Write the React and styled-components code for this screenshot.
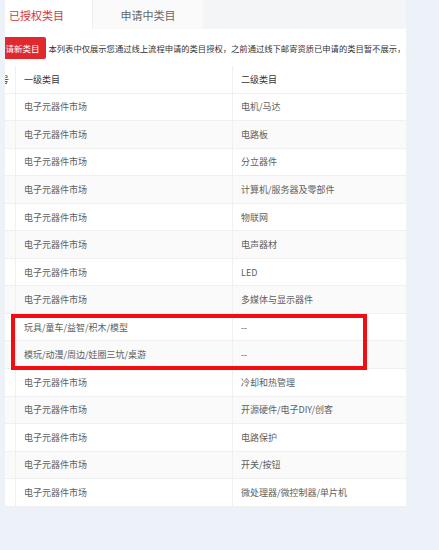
import React from "react";
import styled, { createGlobalStyle } from "styled-components";

const GlobalStyle = createGlobalStyle`
  html, body {
    margin: 0;
    padding: 0;
    background: #edf1f8;
    font-family: "Noto Sans CJK SC", "Noto Sans", sans-serif;
  }
`;

const rows = [
  ["电子元器件市场", "电机/马达"],
  ["电子元器件市场", "电路板"],
  ["电子元器件市场", "分立器件"],
  ["电子元器件市场", "计算机/服务器及零部件"],
  ["电子元器件市场", "物联网"],
  ["电子元器件市场", "电声器材"],
  ["电子元器件市场", "LED"],
  ["电子元器件市场", "多媒体与显示器件"],
  ["玩具/童车/益智/积木/模型", "--"],
  ["模玩/动漫/周边/娃圈三坑/桌游", "--"],
  ["电子元器件市场", "冷却和热管理"],
  ["电子元器件市场", "开源硬件/电子DIY/创客"],
  ["电子元器件市场", "电路保护"],
  ["电子元器件市场", "开关/按钮"],
  ["电子元器件市场", "微处理器/微控制器/单片机"],
];

const Page = styled.div`
  height: 550px;
  padding-left: 5px;
  box-sizing: border-box;
`;

const Panel = styled.div`
  position: relative;
  width: 401px;
  background: #fff;
  overflow: hidden;
`;

const Tabs = styled.div`
  display: flex;
  height: 29px;
  background: #f4f5f7;
`;

const Tab = styled.div`
  display: flex;
  align-items: center;
  justify-content: ${(p) => (p.$active ? "flex-start" : "center")};
  width: ${(p) => p.$w}px;
  padding-left: ${(p) => (p.$active ? 4 : 0)}px;
  box-sizing: border-box;
  font-size: 11px;
  color: ${(p) => (p.$active ? "#d8343a" : "#666")};
  background: ${(p) => (p.$active ? "#fff" : "#fafafa")};
  border-left: ${(p) => (p.$active ? "none" : "1px solid #eeeeee")};
`;

const Scroller = styled.div`
  margin-left: -14px;
`;

const Toolbar = styled.div`
  display: flex;
  align-items: center;
  height: 37px;
  white-space: nowrap;
`;

const Button = styled.div`
  display: flex;
  align-items: center;
  height: 22px;
  padding: 0 6px;
  border-radius: 2px;
  background: #e0292e;
  color: #fff;
  font-size: 8.5px;
  flex-shrink: 0;
`;

const Notice = styled.span`
  margin-left: 3px;
  font-size: 8.3px;
  color: #333;
`;

const Warn = styled.span`
  margin-left: 2px;
  color: #f5a623;
  font-size: 8.3px;
`;

const Row = styled.div`
  display: grid;
  grid-template-columns: 25px 217px 173px;
  height: 27.56px;
  box-sizing: border-box;
  border-bottom: 1px solid #f0f0f0;
  background: ${(p) => (p.$striped ? "#fafafa" : "#fff")};
`;

const Cell = styled.div`
  display: flex;
  align-items: center;
  padding-left: ${(p) => (p.$first ? 0 : 8)}px;
  border-right: ${(p) => (p.$last ? "none" : "1px solid #f0f0f0")};
  font-size: 9px;
  color: ${(p) => (p.$head ? "#333" : "#606060")};
  white-space: nowrap;
  overflow: hidden;
`;

const Highlight = styled.div`
  position: absolute;
  left: 6px;
  top: 314px;
  width: 356px;
  height: 56px;
  box-sizing: border-box;
  border: 4px solid #f20d12;
  pointer-events: none;
`;

export default function App() {
  return (
    <>
      <GlobalStyle />
      <Page>
        <Panel>
          <Tabs>
            <Tab $active $w={87}>已授权类目</Tab>
            <Tab $w={111}>申请中类目</Tab>
          </Tabs>
          <Scroller>
            <Toolbar>
              <Button>申请新类目</Button>
              <Notice>
                本列表中仅展示您通过线上流程申请的类目授权，之前通过线下邮寄资质已申请的类目暂不展示，
              </Notice>
              <Warn>如有疑问请联系客服</Warn>
            </Toolbar>
            <Row>
              <Cell $first $head>
                序号
              </Cell>
              <Cell $head>一级类目</Cell>
              <Cell $head $last>
                二级类目
              </Cell>
            </Row>
            {rows.map(([a, b], i) => (
              <Row key={i} $striped={i % 2 === 1}>
                <Cell $first />
                <Cell>{a}</Cell>
                <Cell $last>{b}</Cell>
              </Row>
            ))}
          </Scroller>
          <Highlight />
        </Panel>
      </Page>
    </>
  );
}
